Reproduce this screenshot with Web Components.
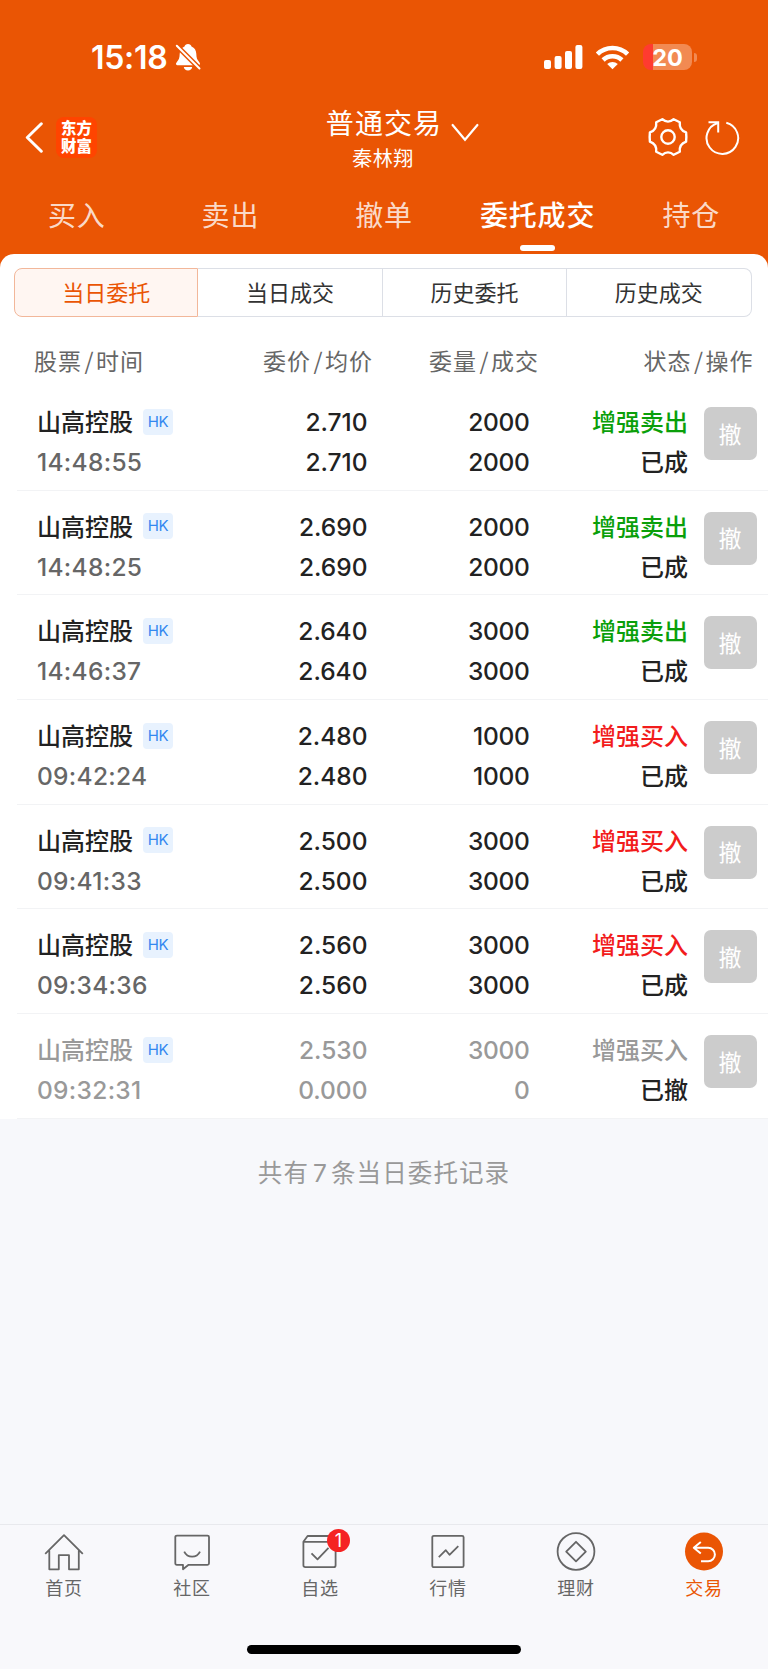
<!DOCTYPE html>
<html lang="zh-CN">
<head>
<meta charset="UTF-8">
<meta name="viewport" content="width=device-width, initial-scale=1.0">
<title>委托成交</title>
<style>
  html, body {
    margin: 0;
    padding: 0;
  }
  body {
    background: #f7f8fb;
    font-family: "Noto Sans CJK SC", sans-serif;
    color: #222;
  }
</style>
</head>
<body>
<trade-app></trade-app>

<script>
class StatusBar extends HTMLElement {
  connectedCallback() {
    this.attachShadow({ mode: 'open' });
    this.shadowRoot.innerHTML = `
      <style>
        :host {
          display: flex;
          justify-content: space-between;
          align-items: center;
          height: 30px;
          padding: 42px 71px 0 91px;
          color: #fff;
          font-family: Inter, sans-serif;
        }
        .left, .right { display: flex; align-items: center; }
        .time { font-size: 32px; font-weight: 600; line-height: 30px; letter-spacing: -0.3px; padding-top: 2px; }
        .bell { margin-left: 8px; }
        .wifi { margin: 0 13px 0 12px; }
        svg { display: block; }
        .battery {
          width: 49px;
          height: 26px;
          border-radius: 8px;
          background: linear-gradient(90deg, #ff3b30 10px, #f28a52 10px);
          font-size: 23.5px;
          font-weight: 700;
          line-height: 27px;
          text-align: center;
        }
        .tip { width: 3px; height: 9px; margin-left: 2px; border-radius: 0 4px 4px 0; background: #f28a52; }
      </style>
      <div class="left">
        <span class="time">15:18</span>
        <svg class="bell" width="26" height="28" viewBox="0 0 26 28">
          <path fill="#fff" d="M13 1C11.1 1 9.9 2 9.5 3.4C6.4 4.6 4.8 7.3 4.7 10.8C4.6 15.1 3.8 16.8 1.9 18.9C.3 20.7 1 22.2 3 22.2H23C25 22.2 25.7 20.7 24.1 18.9C22.2 16.8 21.4 15.1 21.3 10.8C21.2 7.3 19.6 4.6 16.5 3.4C16.1 2 14.9 1 13 1ZM8.8 24H17.2C16.9 26.1 15.3 27.5 13 27.5S9.1 26.1 8.8 24Z"/>
          <path stroke="#ea5504" stroke-width="5" d="M1 2L25 26"/>
          <path stroke="#fff" stroke-width="2" stroke-linecap="round" d="M1.8 2.8L24.5 25.5"/>
        </svg>
      </div>
      <div class="right">
        <svg width="39" height="26" viewBox="0 0 39 26" fill="#fff">
          <rect x="0" y="16" width="7" height="9" rx="2"/>
          <rect x="10.6" y="12" width="7" height="13" rx="2"/>
          <rect x="21" y="7" width="7" height="18" rx="2"/>
          <rect x="31.4" y="1" width="7" height="24" rx="2"/>
        </svg>
        <svg class="wifi" width="35" height="26" viewBox="0 0 35 26" fill="none" stroke="#fff" stroke-width="4.6">
          <path d="M2.4 10.2A21.6 21.6 0 0 1 32.6 10.2"/>
          <path d="M8.1 16A13.6 13.6 0 0 1 26.9 16"/>
          <path fill="#fff" stroke="none" d="M12.2 20A8 8 0 0 1 22.8 20L17.5 25.3Z"/>
        </svg>
        <div class="battery">20</div>
        <div class="tip"></div>
      </div>
    `;
  }
}

class TitleBar extends HTMLElement {
  connectedCallback() {
    this.attachShadow({ mode: 'open' });
    this.shadowRoot.innerHTML = `
      <style>
        :host {
          display: grid;
          grid-template-columns: 1fr auto 1fr;
          height: 106px;
          padding: 0 28px 0 25px;
          color: #fff;
        }
        svg { display: block; }
        .left, .right { display: flex; align-items: center; padding-top: 24px; height: 82px; }
        .right { justify-content: flex-end; gap: 17px; }
        .logo {
          box-sizing: border-box;
          width: 41px;
          height: 41px;
          margin-left: 13px;
          padding: 2.5px 5px;
          border-radius: 8px;
          background: #ff4400;
          font-size: 15.4px;
          font-weight: 900;
          line-height: 17.5px;
          word-break: break-all;
        }
        .center { text-align: center; padding: 31px 0 0 1px; }
        .title { position: relative; height: 38px; font-size: 28px; line-height: 38px; letter-spacing: 1.1px; padding-left: 2px; }
        .title svg { position: absolute; left: 127px; top: 20px; }
        .user { font-size: 20px; line-height: 34px; letter-spacing: 0.5px; }
      </style>
      <div class="left">
        <svg width="18" height="31" viewBox="0 0 18 31" fill="none" stroke="#fff" stroke-width="3" stroke-linecap="round" stroke-linejoin="round">
          <path d="M16.3 1.8L2.3 15.5L16.3 29.2"/>
        </svg>
        <div class="logo">东方财富</div>
      </div>
      <div class="center">
        <div class="title">普通交易
          <svg width="28" height="20" viewBox="0 0 28 20" fill="none" stroke="#fff" stroke-width="2.2" stroke-linecap="round">
            <path d="M1.6 2L14 16.8L26.4 2"/>
          </svg>
        </div>
        <div class="user">秦林翔</div>
      </div>
      <div class="right">
        <svg width="40" height="40" viewBox="0 0 40 40" fill="none" stroke="#fff" stroke-width="2.4" stroke-linejoin="round">
          <path d="M14.3 2.2C16 3.8 17.8 4.6 20 4.6S24 3.8 25.7 2.2L31.8 5.3C31.3 10 33.6 13.8 38.1 15.4Q38.6 20 38.1 24.6C33.6 26.2 31.3 30 31.8 34.7L25.7 37.8C24 36.2 22.2 35.4 20 35.4S16 36.2 14.3 37.8L8.2 34.7C8.7 30 6.4 26.2 1.9 24.6Q1.4 20 1.9 15.4C6.4 13.8 8.7 10 8.2 5.3Z"/>
          <circle cx="20" cy="20" r="6.7"/>
        </svg>
        <svg width="35" height="37" viewBox="0 0 35 37" fill="none" stroke="#fff" stroke-width="2">
          <path d="M21.3 3.8A15.8 15.8 0 1 1 12.7 4"/>
          <path d="M3.5 3.3H13.2V13.5"/>
        </svg>
      </div>
    `;
  }
}

class TradeTabs extends HTMLElement {
  connectedCallback() {
    const active = this.getAttribute('active');
    const tabs = ['买入', '卖出', '撤单', '委托成交', '持仓'];
    this.attachShadow({ mode: 'open' });
    this.shadowRoot.innerHTML = `
      <style>
        :host {
          display: grid;
          grid-template-columns: repeat(5, 1fr);
          height: 75.5px;
          color: rgba(255, 255, 255, 0.8);
          font-size: 28px;
          letter-spacing: 0.8px;
          text-align: center;
        }
        .tab { line-height: 72px; height: 75.5px; position: relative; }
        .active { color: #fff; font-weight: 500; }
        .active::after {
          content: '';
          position: absolute;
          left: calc(50% - 17.5px);
          bottom: 3px;
          width: 35px;
          height: 5.5px;
          border-radius: 3px;
          background: #fff;
        }
      </style>
      ${tabs.map(t => `<div class="tab ${t === active ? 'active' : ''}">${t}</div>`).join('')}
    `;
  }
}

class SegmentControl extends HTMLElement {
  connectedCallback() {
    this.attachShadow({ mode: 'open' });
    this.shadowRoot.innerHTML = `
      <style>
        :host {
          display: grid;
          grid-template-columns: repeat(4, 1fr);
          height: 49px;
          margin: 0 16.5px 0 14px;
          font-size: 22px;
          line-height: 44px;
          text-align: center;
          color: #333;
        }
        div {
          box-sizing: border-box;
          border: 1px solid #dcdfe6;
          border-left: 0;
        }
        div:first-of-type {
          border: 1px solid #f2b79a;
          border-radius: 8px 0 0 8px;
          background: #fff6f2;
          color: #ea5504;
        }
        div:last-of-type { border-radius: 0 8px 8px 0; }
      </style>
      <div>当日委托</div><div>当日成交</div><div>历史委托</div><div>历史成交</div>
    `;
  }
}

class OrderHead extends HTMLElement {
  connectedCallback() {
    this.attachShadow({ mode: 'open' });
    this.shadowRoot.innerHTML = `
      <style>
        :host {
          display: grid;
          grid-template-columns: 169px 170px 166px 214.5px;
          height: 51px;
          padding: 18px 0 0 34px;
          font-size: 23px;
          line-height: 50px;
          letter-spacing: 1px;
          color: #666;
        }
        span { text-align: right; white-space: nowrap; }
        span:first-of-type { text-align: left; }
        i { font-style: normal; margin: 0 1.5px 0 2.5px; }
      </style>
      <span>股票<i>/</i>时间</span><span>委价<i>/</i>均价</span><span>委量<i>/</i>成交</span><span>状态<i>/</i>操作</span>
    `;
  }
}

class OrderRow extends HTMLElement {
  connectedCallback() {
    const a = name => this.getAttribute(name);
    this.attachShadow({ mode: 'open' });
    this.shadowRoot.innerHTML = `
      <style>
        :host {
          display: grid;
          grid-template-columns: 150px 180.5px 162px 158.5px 68.5px;
          box-sizing: border-box;
          height: 104.7px;
          margin-left: 17px;
          padding: 16px 0 0 20px;
          border-bottom: 1px solid #f2f3f5;
          color: #222;
          font-size: 24px;
          font-weight: 500;
        }
        .cell { text-align: right; line-height: 40px; white-space: nowrap; }
        .cell > div { height: 40px; }
        .stock { text-align: left; }
        .num { font-family: Inter, sans-serif; font-size: 24.5px; }
        .qty { letter-spacing: -0.3px; }
        .name { display: flex; align-items: center; }
        .badge {
          flex: none;
          width: 30px;
          height: 26px;
          margin: 0 0 1px 10px;
          border-radius: 4px;
          background: #e8f2fe;
          color: #3388f0;
          font: 400 15px/26px Inter, sans-serif;
          letter-spacing: -0.4px;
          text-align: center;
        }
        .time { color: #666; letter-spacing: 0.3px; }
        .cjk { position: relative; top: -1px; }
        .sell { color: #0a9f0a; }
        .buy { color: #f21c1c; }
        button {
          width: 53px;
          height: 53px;
          margin: 5px 0 0 15.5px;
          padding: 0 0 2px;
          border: 0;
          border-radius: 7px;
          background: #ccc;
          color: #fff;
          font: 400 23px "Noto Sans CJK SC", sans-serif;
        }
        :host([side="void"]) .cell { color: #999; }
        :host([side="void"]) .time { color: #999; }
        :host([side="void"]) .state { color: #222; }
      </style>
      <div class="cell stock">
        <div class="name"><span class="cjk">山高控股</span><span class="badge">HK</span></div>
        <div class="num time">${a('time')}</div>
      </div>
      <div class="cell num"><div>${a('price')}</div><div>${a('avg')}</div></div>
      <div class="cell num qty"><div>${a('qty')}</div><div>${a('done')}</div></div>
      <div class="cell"><div class="cjk ${a('side')}">${a('action')}</div><div class="cjk state">${a('state')}</div></div>
      <div><button>撤</button></div>
    `;
  }
}

class TabBar extends HTMLElement {
  connectedCallback() {
    const items = [
      ['首页', '<path d="M1.2 20.8L20 2.2L38.8 20.8M5.3 17.5V36.3H14.8V22.2H25V36.3H34.8V17.5"/>'],
      ['社区', '<path d="M5 2.6H35.5Q37 2.6 37 4.1V30.3Q37 31.8 35.5 31.8H16.6L11 36.2V31.8H4.8Q3.3 31.8 3.3 30.3V4.1Q3.3 2.6 5 2.6Z"/><path d="M12.2 18.6C15.5 25.4 24.7 25.4 28 18.6"/>'],
      ['自选', '<path d="M3.4 8.8L7.6 3H31.3L35.6 8.8V32.2Q35.6 34.2 33.6 34.2H5.4Q3.4 34.2 3.4 32.2ZM3.4 8.8H35.6M11.5 20.3L17.5 26.4L28.5 14.8"/>'],
      ['行情', '<rect x="4.3" y="2.8" width="31.3" height="31.4" rx="1.5"/><path d="M10.8 24.2L17.8 17.2L21.5 21.8L30.3 13.2"/>'],
      ['理财', '<circle cx="20" cy="18.5" r="18.4"/><path d="M20 8.8L29.8 18.6L20 28.4L10.2 18.6Z"/>'],
      ['交易', '<circle cx="20" cy="18.5" r="19" fill="#ea5504" stroke="none"/><path stroke="#fff" stroke-width="2" d="M16.8 9L9.8 14.8L16.8 20.5M10 14.8H24.2A6.7 6.7 0 0 1 24.2 28.2H17"/>']
    ];
    this.attachShadow({ mode: 'open' });
    this.shadowRoot.innerHTML = `
      <style>
        :host {
          display: flex;
          flex-direction: column;
          box-sizing: border-box;
          height: 145.5px;
          border-top: 1.5px solid #e8e9ed;
          background: #f8f8fb;
        }
        nav { display: grid; grid-template-columns: repeat(6, 1fr); padding-top: 8px; }
        .item {
          display: flex;
          flex-direction: column;
          align-items: center;
          position: relative;
          color: #666;
          font-size: 18px;
          line-height: 30px;
          letter-spacing: 0.7px;
        }
        .item:last-child { color: #ea5504; }
        svg { display: block; overflow: visible; margin-bottom: 1px; }
        .dot {
          position: absolute;
          left: 71px;
          top: -4px;
          width: 23px;
          height: 23px;
          border-radius: 50%;
          background: #f52323;
          color: #fff;
          font: 400 18px/23px Inter, sans-serif;
          letter-spacing: 0;
          text-align: center;
        }
        .home { width: 274px; height: 9px; margin: 43px auto 0; border-radius: 5px; background: #000; }
      </style>
      <nav>
        ${items.map(([label, icon], i) => `
          <div class="item">
            <svg width="40" height="38" viewBox="0 0 40 38" fill="none" stroke="#666" stroke-width="1.8" stroke-linejoin="round">${icon}</svg>
            <span>${label}</span>
            ${i === 2 ? '<span class="dot">1</span>' : ''}
          </div>`).join('')}
      </nav>
      <div class="home"></div>
    `;
  }
}

class TradeApp extends HTMLElement {
  connectedCallback() {
    const orders = [
      ['14:48:55', '2.710', '2.710', '2000', '2000', 'sell', '增强卖出', '已成'],
      ['14:48:25', '2.690', '2.690', '2000', '2000', 'sell', '增强卖出', '已成'],
      ['14:46:37', '2.640', '2.640', '3000', '3000', 'sell', '增强卖出', '已成'],
      ['09:42:24', '2.480', '2.480', '1000', '1000', 'buy', '增强买入', '已成'],
      ['09:41:33', '2.500', '2.500', '3000', '3000', 'buy', '增强买入', '已成'],
      ['09:34:36', '2.560', '2.560', '3000', '3000', 'buy', '增强买入', '已成'],
      ['09:32:31', '2.530', '0.000', '3000', '0', 'void', '增强买入', '已撤']
    ];
    this.attachShadow({ mode: 'open' });
    this.shadowRoot.innerHTML = `
      <style>
        :host {
          display: flex;
          flex-direction: column;
          width: 768px;
          height: 1669px;
          overflow: hidden;
        }
        header, .sheet-top { background: #ea5504; }
        .sheet {
          padding-top: 14.5px;
          border-radius: 14px 14px 0 0;
          background: #fff;
        }
        .summary {
          flex: 1;
          padding-top: 31px;
          color: #999;
          font-size: 24.5px;
          line-height: 44px;
          letter-spacing: 1.1px;
          text-align: center;
        }
        .count { font-family: Inter, sans-serif; margin: 0 3px 0 4px; }
      </style>
      <header>
        <status-bar></status-bar>
        <title-bar></title-bar>
        <trade-tabs active="委托成交"></trade-tabs>
      </header>
      <div class="sheet-top">
        <div class="sheet">
          <segment-control></segment-control>
          <order-head></order-head>
          ${orders.map(([time, price, avg, qty, done, side, action, state]) => `
            <order-row time="${time}" price="${price}" avg="${avg}" qty="${qty}" done="${done}"
              side="${side}" action="${action}" state="${state}"></order-row>`).join('')}
        </div>
      </div>
      <div class="summary">共有<span class="count">${orders.length}</span>条当日委托记录</div>
      <tab-bar></tab-bar>
    `;
  }
}

customElements.define('status-bar', StatusBar);
customElements.define('title-bar', TitleBar);
customElements.define('trade-tabs', TradeTabs);
customElements.define('segment-control', SegmentControl);
customElements.define('order-head', OrderHead);
customElements.define('order-row', OrderRow);
customElements.define('tab-bar', TabBar);
customElements.define('trade-app', TradeApp);
</script>
</body>
</html>
